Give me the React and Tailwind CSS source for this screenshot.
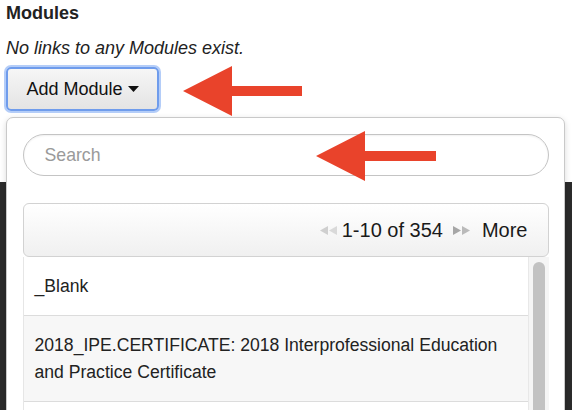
import React from "react";

function DoubleArrow({ dir, color }) {
    // two small triangles side by side, like the pager glyphs
    const pts =
        dir === "left"
            ? ["9,0 9,9 1,4.5", "18,0 18,9 10,4.5"]
            : ["0,0 0,9 8,4.5", "9,0 9,9 17,4.5"];
    return (
        <svg width="18" height="9" viewBox="0 0 18 9" className="shrink-0">
            <polygon points={pts[0]} fill={color} />
            <polygon points={pts[1]} fill={color} opacity="0.75" />
        </svg>
    );
}

function RedArrow({ className, w, h }) {
    const mid = h / 2;
    return (
        <svg width={w} height={h} viewBox={`0 0 ${w} ${h}`} className={className}>
            <polygon
                points={`0,${mid} 49,0 49,${mid - 5} ${w},${mid - 5} ${w},${mid + 5} 49,${mid + 5} 49,${h}`}
                fill="#e9432b"
            />
        </svg>
    );
}

export default function App() {
    const items = [
        "_Blank",
        "2018_IPE.CERTIFICATE: 2018 Interprofessional Education and Practice Certificate",
    ];

    return (
        <div className="relative w-[572px] h-[410px] overflow-hidden bg-white flex flex-col font-['Liberation_Sans',Arial,sans-serif] text-[#222]">
            <div className="h-[182px] shrink-0 px-[6px] pt-[3px]">
                <h2 className="text-[18px] font-bold leading-[20px]">Modules</h2>
                <p className="mt-[15px] text-[18px] italic leading-[20px]">
                    No links to any Modules exist.
                </p>
                <button className="mt-[9px] w-[153px] h-[44px] rounded-[5px] border-2 border-[#6f9cec] bg-gradient-to-b from-[#f6f6f6] to-[#e4e4e4] shadow-[0_0_0_2px_rgba(140,178,245,0.65)] flex items-center justify-center gap-[5px] text-[18px] text-[#111]">
                    Add Module
                    <svg width="11" height="6" viewBox="0 0 11 6">
                        <polygon points="0,0 11,0 5.5,6" fill="#111" />
                    </svg>
                </button>
            </div>
            <div className="flex-1 bg-[#2b2b2b]" />

            <div className="absolute top-[117px] left-[6px] w-[559px] h-[320px] bg-white border border-[#c9c9c9] rounded-[7px] shadow-[0_2px_6px_rgba(0,0,0,0.15)] pt-[16px] px-[15.5px]">
                <div className="h-[42px] rounded-full border border-[#c4c4c4] shadow-[inset_0_1px_2px_rgba(0,0,0,0.06)] flex items-center pl-[21px] text-[17.7px] text-[#9a9a9a]">
                    Search
                </div>

                <div className="mt-[27px] h-[54px] rounded-[6px] border border-[#d2d2d2] bg-gradient-to-b from-white to-[#f0f0f0] flex items-center justify-end pr-[20px] text-[20px] text-[#1a1a1a]">
                    <DoubleArrow dir="left" color="#cfcfcf" />
                    <span className="ml-[5px]">1-10 of 354</span>
                    <span className="ml-[10px]">
                        <DoubleArrow dir="right" color="#a6a6a6" />
                    </span>
                    <span className="ml-[11px]">More</span>
                </div>

                <div className="flex h-[160px]">
                    <div className="flex-1 border-l border-[#e6e6e6]">
                        {items.map((t, i) => (
                            <div
                                key={i}
                                className={`px-[11px] py-[15.5px] border-b border-[#dcdcdc] text-[17.6px] leading-[27px] ${i % 2 ? "bg-[#f7f7f7]" : "bg-white"}`}
                            >
                                {t}
                            </div>
                        ))}
                    </div>
                    <div className="w-[21px] shrink-0 bg-[#f5f5f5] border-l border-[#e8e8e8] pt-[5px] flex justify-center">
                        <div className="w-[12px] h-[200px] rounded-full bg-[#c2c2c2]" />
                    </div>
                </div>
            </div>

            <RedArrow className="absolute left-[183px] top-[66px]" w={119} h={50} />
            <RedArrow className="absolute left-[316px] top-[131px]" w={120} h={50} />
        </div>
    );
}
